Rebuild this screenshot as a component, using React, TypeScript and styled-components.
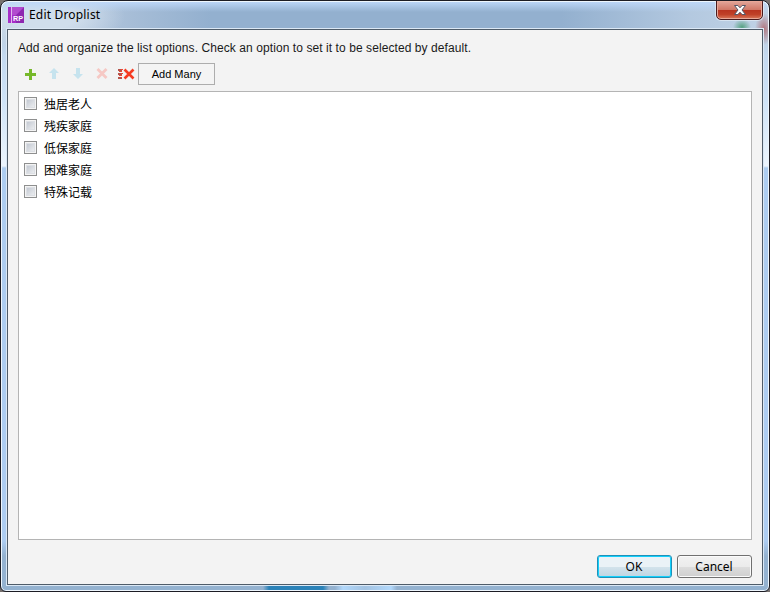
import React from 'react';
import styled, { createGlobalStyle } from 'styled-components';

const Global = createGlobalStyle`
  * { box-sizing: border-box; }
  html, body { margin: 0; background: #77716f; overflow: hidden; }
  button { margin: 0; padding: 0; }
`;

const Frame = styled.div`
  width: 770px;
  height: 592px;
  padding: 1px 6px 6px 6px;
  display: flex;
  flex-direction: column;
  border: 1px solid #1c1c24;
  border-radius: 8px 8px 6px 6px;
  overflow: hidden;
  box-shadow: inset 0 0 0 1px #eef6fd;
  background:
    radial-gradient(ellipse 9px 8px at 741px 26px, #57a283 0%, #57a28300 100%),
    radial-gradient(ellipse 9px 16px at 763px 28px, #b07780 0%, #b0778000 100%),
    linear-gradient(90deg, #ffffff00 262px, #2b82b8 268px, #2b82b8 322px, #94b2d000 328px, #94b2d000 334px, #b2d8fb 342px, #a3c3e2 364px, #b2d8fb 390px, #94b2d000 396px) 0 584px / 100% 6px no-repeat,
    linear-gradient(180deg, #bed8fa 0, #bed8fa00 11px),
    radial-gradient(ellipse 82px 34px at 42px 15px, #d0deec 0 40%, #d0deec00 100%),
    linear-gradient(90deg, #c3d3e5 0, #a9bfd8 120px, #93b0cf 210px, #93b0cf 560px, #b4c9e0 690px, #c0d2e5 100%) 0 0 / 100% 28px no-repeat,
    linear-gradient(180deg, #b9cbdd 28px, #c4d9f0 55px, #cfe3f7 100px, #ecf5fd 165px, #adcdf0 167px, #adcdf2 540px, #94b2d0 555px, #94b2d0 100%);
`;

const TitleBar = styled.header`
  height: 27px;
  flex: none;
  display: flex;
  align-items: flex-start;
  padding-left: 1px;
`;

const AppIcon = styled.svg`
  width: 16px;
  height: 16px;
  margin-top: 5px;
  flex: none;
  overflow: visible;
`;

const Title = styled.h1`
  margin: 4px 0 0 5px;
  flex: 1;
  font: 400 12px/18px 'Noto Sans', sans-serif;
  letter-spacing: 0.18px;
  color: #000;
`;

const CloseButton = styled.button`
  width: 47px;
  height: 20px;
  margin-top: -2px;
  display: flex;
  align-items: center;
  justify-content: center;
  border: 1px solid #4a1a1c;
  border-radius: 0 0 5px 5px;
  box-shadow: inset 0 0 0 1px #e8a898, 0 0 0 1px #e6eef8aa;
  background: linear-gradient(180deg, #e3a79b 0, #d07867 48%, #b8331f 50%, #c04128 75%, #d97a5c 100%);
`;

const Panel = styled.main`
  flex: 1;
  min-height: 0;
  display: flex;
  flex-direction: column;
  padding: 9px 10px 6px;
  border: 1px solid #4f5c69;
  background: #f3f3f3;
  box-shadow: 0 0 0 1px #dbe8f5;
`;

const Hint = styled.p`
  margin: 0;
  height: 18px;
  font: 12px/18px 'Liberation Sans', sans-serif;
  letter-spacing: 0.078px;
  color: #1a1a1a;
  white-space: nowrap;
`;

const Toolbar = styled.div`
  height: 22px;
  margin: 6px 0;
  display: flex;
  align-items: center;
`;

const Tool = styled.button<{ $faded?: boolean }>`
  width: 24px;
  height: 22px;
  border: 0;
  background: none;
  opacity: ${(p) => (p.$faded ? 0.25 : 1)};
  svg { display: block; }
`;

const AddMany = styled.button`
  width: 77px;
  height: 22px;
  border: 1px solid #adadad;
  background: #f4f4f4;
  color: #000;
  font: 11px/20px 'Liberation Sans', sans-serif;
`;

const OptionList = styled.ul`
  flex: 1;
  margin: 0;
  padding: 1px 5px;
  list-style: none;
  border: 1px solid #b4b4b4;
  background: #fff;
`;

const Option = styled.li`
  height: 22px;
  display: flex;
  align-items: center;
  gap: 7px;
  font: 12px/22px 'Liberation Sans', 'Noto Sans CJK SC', sans-serif;
  color: #000;
`;

const Check = styled.span`
  width: 13px;
  height: 13px;
  margin-top: -1px;
  border: 1px solid #8e8f8f;
  background: linear-gradient(135deg, #b9bfca, #f5f6f7);
  box-shadow: inset 0 0 0 1px #f4f4f4, inset 0 0 0 2px #dcdfe4;
`;

const OptionLabel = styled.span`
  padding-top: 2px;
`;

const Footer = styled.footer`
  display: flex;
  justify-content: flex-end;
  gap: 5px;
  padding-top: 15px;
`;

const DialogButton = styled.button<{ $primary?: boolean }>`
  width: 75px;
  height: 23px;
  border: 1px solid ${(p) => (p.$primary ? '#1f91b8' : '#707070')};
  border-radius: 3px;
  box-shadow: inset 0 0 0 1px ${(p) => (p.$primary ? '#12d0fc' : '#fbfbfb')};
  background: ${(p) =>
    p.$primary
      ? 'linear-gradient(180deg, #eaf2f7 0 50%, #d3e3ec 51%, #bdd5e2)'
      : 'linear-gradient(180deg, #f2f2f2 0, #ebebeb 50%, #dddddd 51%, #cfcfcf)'};
  color: #000;
  font: 12px/20px 'Noto Sans', sans-serif;
  padding-right: 1px;
`;

const options = ['独居老人', '残疾家庭', '低保家庭', '困难家庭', '特殊记载'];

export default function App() {
  return (
    <>
      <Global />
      <Frame>
        <TitleBar>
          <AppIcon viewBox="0 0 16 16">
            <path fill="#a62fc8" d="M0 0h16v16H0z" />
            <path fill="#8d27b0" d="M8 8 16 0v16H8z" />
            <path fill="#b24ccf" d="M4 0h12L8 8H4z" />
            <path fill="#e2b8ee" d="M3 0h1v16H3z" />
            <text x="5" y="14" fill="#fff" fontSize="8" fontWeight="700" fontFamily="Liberation Sans" textLength="10" lengthAdjust="spacingAndGlyphs">RP</text>
          </AppIcon>
          <Title>Edit Droplist</Title>
          <CloseButton aria-label="Close">
            <svg width="14" height="12" viewBox="0 0 14 12">
              <path d="M1.5 1.5h3.4L7 3.8l2.1-2.3h3.4L9 6l3.5 4.5H9.1L7 8.2l-2.1 2.3H1.5L5 6z" fill="#fff" stroke="#535666" />
            </svg>
          </CloseButton>
        </TitleBar>
        <Panel>
          <Hint>Add and organize the list options. Check an option to set it to be selected by default.</Hint>
          <Toolbar>
            <Tool aria-label="Add">
              <svg width="24" height="22"><path d="M7 11.500h11M12.500 6v11" stroke="#76b82a" strokeWidth="3" /></svg>
            </Tool>
            <Tool $faded aria-label="Move up">
              <svg width="24" height="22"><path d="M12 5l5 5h-3v6h-4v-6H7z" fill="#45b5e0" /></svg>
            </Tool>
            <Tool $faded aria-label="Move down">
              <svg width="24" height="22"><path d="M12 16l5-5h-3V5h-4v6H7z" fill="#45b5e0" /></svg>
            </Tool>
            <Tool $faded aria-label="Delete">
              <svg width="24" height="22"><path d="M7.500 6l9 9M16.500 6l-9 9" stroke="#ff4d3d" strokeWidth="2.800" /></svg>
            </Tool>
            <Tool aria-label="Delete all">
              <svg width="24" height="22">
                <path d="M4 7h4M4 11h4M4 15h4" stroke="#b4544c" strokeWidth="2" />
                <path d="M5 8.500h3M5 12.500h3M7 6.500h2M7 10.500h2M7 14.500h1" stroke="#f04432" />
                <path d="M10.500 6.500l9 9M19.500 6.500l-9 9" stroke="#f63c22" strokeWidth="2.600" />
              </svg>
            </Tool>
            <AddMany>Add Many</AddMany>
          </Toolbar>
          <OptionList>
            {options.map((label) => (
              <Option key={label}>
                <Check role="checkbox" aria-checked="false" />
                <OptionLabel>{label}</OptionLabel>
              </Option>
            ))}
          </OptionList>
          <Footer>
            <DialogButton $primary>OK</DialogButton>
            <DialogButton>Cancel</DialogButton>
          </Footer>
        </Panel>
      </Frame>
    </>
  );
}
